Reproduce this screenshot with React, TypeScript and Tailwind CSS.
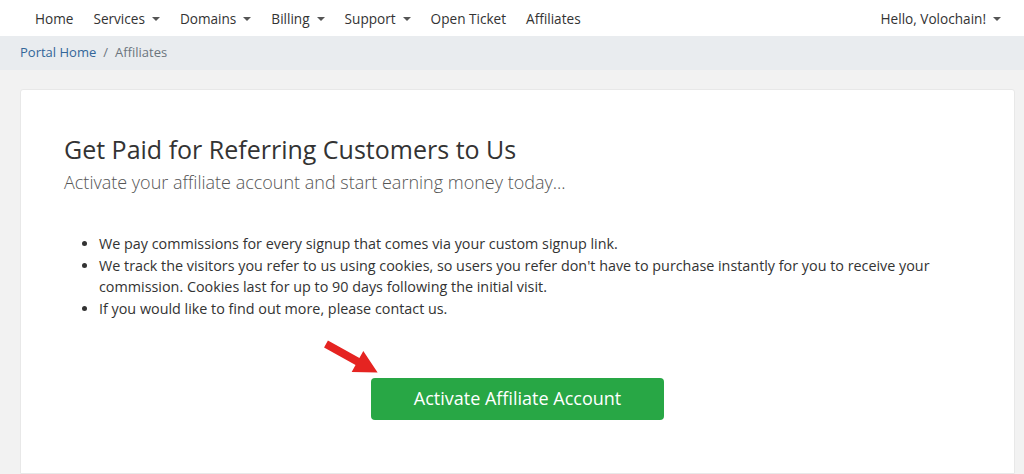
const Caret = () => (
    <span className="ml-[7px] inline-block h-0 w-0 border-x-[4px] border-t-[4px] border-x-transparent border-t-[#555] align-middle"></span>
)

const NavItem = ({ label, dropdown }: { label: string; dropdown?: boolean }) => (
    <a className="flex items-center text-[13.6px] text-[#333]">
        {label}
        {dropdown && <Caret />}
    </a>
)

const App = () => {
    return (
        <div className="min-h-screen bg-[#f2f2f2]" style={{ fontFamily: '"Open Sans", sans-serif' }}>
            <nav className="flex h-[36px] items-center justify-between bg-white pl-[35px] pr-[23px] pt-[2px]">
                <div className="flex gap-[20px]">
                    <NavItem label="Home" />
                    <NavItem label="Services" dropdown />
                    <NavItem label="Domains" dropdown />
                    <NavItem label="Billing" dropdown />
                    <NavItem label="Support" dropdown />
                    <NavItem label="Open Ticket" />
                    <NavItem label="Affiliates" />
                </div>
                <NavItem label="Hello, Volochain!" dropdown />
            </nav>

            <div className="flex h-[34px] items-center bg-[#e9ecef] px-[20px] text-[13px]">
                <a className="text-[#336699]">Portal Home</a>
                <span className="px-[7px] text-[#6c757d]">/</span>
                <span className="text-[#6c757d]">Affiliates</span>
            </div>

            <div className="pl-[20px] pr-[9px] pt-[19px]">
                <div className="min-h-[385px] rounded-t-[3px] border border-[#e8e8e8] bg-white px-[43px] pt-[44px]">
                    <h1 className="text-[25px] leading-[31px] text-[#333]">Get Paid for Referring Customers to Us</h1>
                    <p className="mt-[5px] text-[18px] font-light leading-[24px] text-[#555]">
                        Activate your affiliate account and start earning money today...
                    </p>

                    <ul className="mt-[39px] list-disc pl-[35px] text-[14.35px] leading-[21.7px] text-[#333]">
                        <li>We pay commissions for every signup that comes via your custom signup link.</li>
                        <li>
                            We track the visitors you refer to us using cookies, so users you refer don't have to purchase
                            instantly for you to receive your commission. Cookies last for up to 90 days following the initial
                            visit.
                        </li>
                        <li>If you would like to find out more, please contact us.</li>
                    </ul>

                    <div className="mt-[58px] flex justify-center">
                        <div className="relative">
                            <svg className="absolute left-[-47px] top-[-40px]" width="58" height="40" viewBox="0 0 58 40">
                                <polygon
                                    transform="translate(2,6) rotate(29)"
                                    points="0,-4 36,-4 36,-12 59,0 36,12 36,4 0,4"
                                    fill="#e52421"
                                />
                            </svg>
                            <button className="h-[42px] w-[293px] rounded-[4px] bg-[#28a745] text-[18px] text-white">
                                Activate Affiliate Account
                            </button>
                        </div>
                    </div>
                </div>
            </div>
        </div>
    )
}

export default App
